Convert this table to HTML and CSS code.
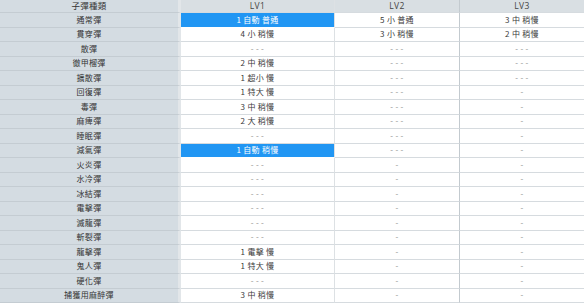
FILE: index.html
```html
<!DOCTYPE html>
<html lang="zh-Hant">
<head>
<meta charset="utf-8">
<link rel="stylesheet" href="styles.css">
</head>
<body>
<div class="tbl">
  <div class="c hd lab">子彈種類</div><div class="c hd">LV1</div><div class="c hd">LV2</div><div class="c hd last">LV3</div>

  <div class="c lab">通常彈</div><div class="c hi">1 自動 普通</div><div class="c">5 小 普通</div><div class="c last">3 中 稍慢</div>
  <div class="c lab">貫穿彈</div><div class="c">4 小 稍慢</div><div class="c">3 小 稍慢</div><div class="c last">2 中 稍慢</div>
  <div class="c lab">散彈</div><div class="c d">- - -</div><div class="c d">- - -</div><div class="c d last">- - -</div>
  <div class="c lab">徹甲榴彈</div><div class="c">2 中 稍慢</div><div class="c d">- - -</div><div class="c d last">- - -</div>
  <div class="c lab">擴散彈</div><div class="c">1 超小 慢</div><div class="c d">- - -</div><div class="c d last">- - -</div>
  <div class="c lab">回復彈</div><div class="c">1 特大 慢</div><div class="c d">- - -</div><div class="c d last">-</div>
  <div class="c lab">毒彈</div><div class="c">3 中 稍慢</div><div class="c d">- - -</div><div class="c d last">-</div>
  <div class="c lab">麻痺彈</div><div class="c">2 大 稍慢</div><div class="c d">- - -</div><div class="c d last">-</div>
  <div class="c lab">睡眠彈</div><div class="c d">- - -</div><div class="c d">- - -</div><div class="c d last">-</div>
  <div class="c lab">減氣彈</div><div class="c hi">1 自動 稍慢</div><div class="c d">- - -</div><div class="c d last">-</div>
  <div class="c lab">火炎彈</div><div class="c d">- - -</div><div class="c d">-</div><div class="c d last">-</div>
  <div class="c lab">水冷彈</div><div class="c d">- - -</div><div class="c d">-</div><div class="c d last">-</div>
  <div class="c lab">冰結彈</div><div class="c d">- - -</div><div class="c d">-</div><div class="c d last">-</div>
  <div class="c lab">電擊彈</div><div class="c d">- - -</div><div class="c d">-</div><div class="c d last">-</div>
  <div class="c lab">滅龍彈</div><div class="c d">- - -</div><div class="c d">-</div><div class="c d last">-</div>
  <div class="c lab">斬裂彈</div><div class="c d">- - -</div><div class="c d">-</div><div class="c d last">-</div>
  <div class="c lab">龍擊彈</div><div class="c">1 電擊 慢</div><div class="c d">-</div><div class="c d last">-</div>
  <div class="c lab">鬼人彈</div><div class="c">1 特大 慢</div><div class="c d">-</div><div class="c d last">-</div>
  <div class="c lab">硬化彈</div><div class="c d">- - -</div><div class="c d">-</div><div class="c d last">-</div>
  <div class="c lab">捕獲用麻醉彈</div><div class="c">3 中 稍慢</div><div class="c d">-</div><div class="c d last">-</div>
</div>
</body>
</html>
```

FILE: styles.css
```css
html, body {
  margin: 0;
  padding: 0;
  background: #ffffff;
}
body {
  width: 584px;
  height: 304px;
  overflow: hidden;
  font-family: "Noto Sans CJK TC", "Noto Sans", sans-serif;
}
.tbl {
  display: grid;
  grid-template-columns: 181px 154px 125px 124px;
  grid-template-rows: 13px repeat(20, 14.5px);
  width: 584px;
}
.c {
  display: flex;
  align-items: center;
  justify-content: center;
  font-size: 8px;
  line-height: 1;
  color: #3a3a3a;
  background: #ffffff;
  border-bottom: 1px solid #d6dbdf;
  border-right: 1px solid #dde1e4;
  box-sizing: border-box;
  white-space: nowrap;
  letter-spacing: 0.3px;
}
.c.last {
  border-right: none;
}
.tbl > .c:nth-child(4n+3) {
  border-right: 1px solid #c3cacf;
}
.hd {
  background: #d9dfe3;
  font-family: "Open Sans", "Noto Sans CJK TC", sans-serif;
  font-size: 8.5px;
  color: #444;
}
.lab {
  background: #d4dce2;
  border-right: 3px solid #e2e6e9;
  border-bottom-color: #c4ccd2;
  color: #333;
}
.hi {
  background: #2196f3;
  color: #ffffff;
  border-bottom-color: #ffffff;
}
.d {
  color: #8a8a8a;
}
```
